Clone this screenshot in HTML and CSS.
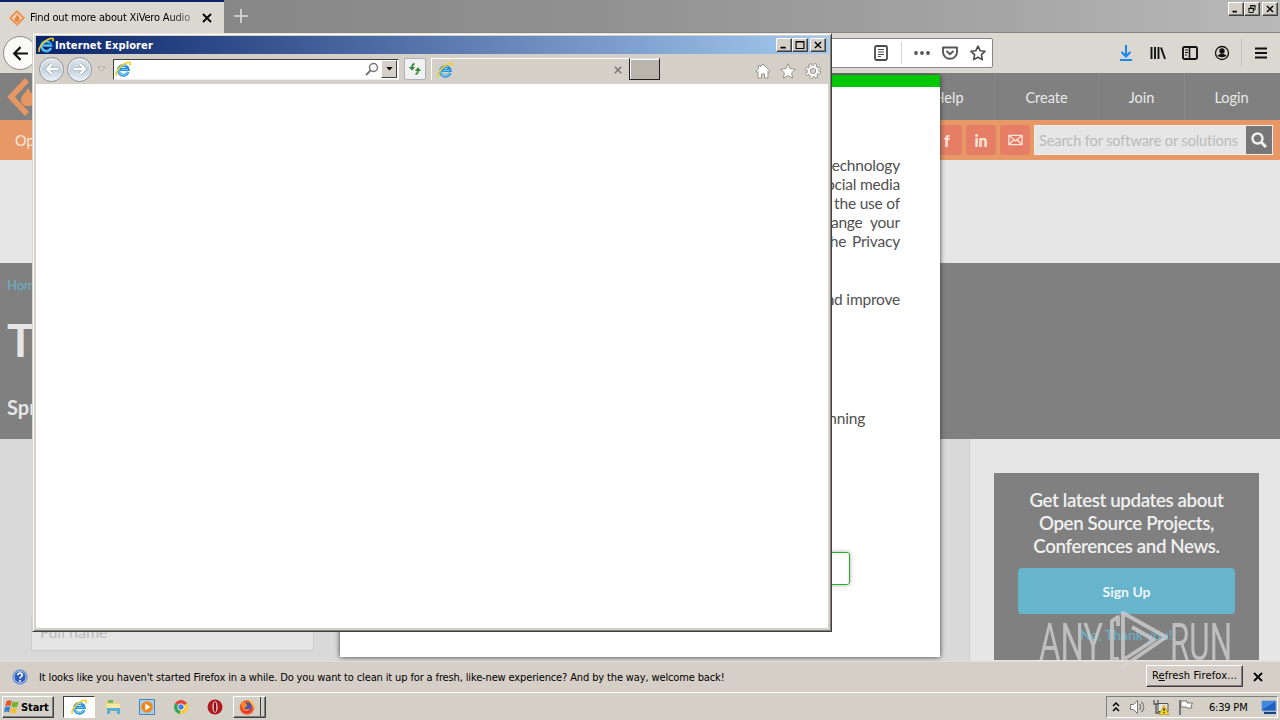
FILE: index.html
```
<!DOCTYPE html>
<html lang="en">
<head>
    <meta charset="UTF-8">
    <title>Find out more about XiVero Audio</title>
    <link rel="stylesheet" href="styles.css">
</head>
<body>
    <svg class="defs">
        <defs>
            <symbol id="ie" viewBox="0 0 16 16">
                <path d="M13 11A4.900 4.900 0 1 1 13.200 8.600H5" fill="none" stroke="#2b8fd3" stroke-width="3"/>
                <path d="M12.800 10.800A4.800 4.800 0 0 1 3.800 10.500C3.300 5.500 8 3.500 11 5M6 8.500h7" fill="none" stroke="#74c8f5" stroke-width="1.200"/>
                <path d="M1.500 14.800C-.8 11 7.500 1.600 14.200 1.300c1.600.2 1.100 2 .5 3" fill="none" stroke="#f2cf25" stroke-width="1.600"/>
            </symbol>
            <symbol id="diamond" viewBox="0 0 16 16">
                <path d="M8 0l8 8-8 8-8-8z" fill="#ee914f"/>
                <path d="M8 2.800L13.200 8 8 13.200 2.800 8z" fill="#f6ddc9"/>
                <path d="M8.300 3.800c.1 2 2.600 2.700 2.400 5C10.500 11 9.500 12 8 12s-2.700-1.300-2.500-3C5.700 7 8 6.300 8.300 3.800z" fill="#e98742"/>
            </symbol>
            <symbol id="cross" viewBox="0 0 10 10">
                <path d="M1 1l8 8M9 1L1 9" fill="none" stroke="currentColor" stroke-width="1.800"/>
            </symbol>
            <symbol id="glass" viewBox="0 0 16 16">
                <circle cx="6.500" cy="6.500" r="5" fill="none" stroke="currentColor" stroke-width="2.400"/>
                <path d="M10 10l5 5" stroke="currentColor" stroke-width="3"/>
            </symbol>
        </defs>
    </svg>

    <div class="desktop">
        <!-- Firefox window -->
        <div class="tabbar">
            <div class="tab">
                <svg class="tab-icon"><use href="#diamond"/></svg>
                <span class="tab-title">Find out more about XiVero Audio</span>
                <svg class="tab-close"><use href="#cross"/></svg>
            </div>
            <svg class="new-tab" viewBox="0 0 14 14"><path d="M7 0v14M0 7h14" stroke="#dedede" stroke-width="1.600"/></svg>
            <div class="win-buttons">
                <button><svg viewBox="0 0 16 13"><path d="M4 9.500h5" stroke="#000" stroke-width="2"/></svg></button>
                <button><svg viewBox="0 0 16 13"><path d="M6.500 5V2.500h5v5H9M4.500 5.500h5v5h-5zM6 3h6M4 6h6" fill="none" stroke="#000"/></svg></button>
                <button class="close"><svg viewBox="0 0 16 13"><path d="M4.500 3l7 7M11.500 3l-7 7" stroke="#000" stroke-width="1.600"/></svg></button>
            </div>
        </div>

        <div class="toolbar">
            <div class="back"><svg viewBox="0 0 16 16"><path d="M15 8H2M8 2L2 8l6 6" fill="none" stroke="#111" stroke-width="2"/></svg></div>
            <div class="urlbar">
                <svg class="reader" viewBox="0 0 16 16"><rect x="2" y="1" width="12" height="14" rx="1.500" fill="none" stroke="#4a4a4a" stroke-width="1.800"/><path d="M5 4.500h6M5 7h6M5 9.500h6M5 11.500h3" stroke="#4a4a4a"/></svg>
                <span class="sep"></span>
                <svg class="dots" viewBox="0 0 16 16"><g fill="#555"><circle cx="2" cy="8" r="1.900"/><circle cx="8" cy="8" r="1.900"/><circle cx="14" cy="8" r="1.900"/></g></svg>
                <svg class="pocket" viewBox="0 0 16 16"><path d="M1 2.500h14v4.500a7 6.800 0 0 1-14 0z" fill="none" stroke="#555" stroke-width="1.900" stroke-linejoin="round"/><path d="M4.500 6L8 9.300 11.500 6" fill="none" stroke="#555" stroke-width="1.900"/></svg>
                <svg class="star" viewBox="0 0 16 16"><path d="M8 1.200l2.100 4.500 4.900.6-3.600 3.400.9 4.900L8 12.200l-4.300 2.400.9-4.900L1 6.300l4.900-.6z" fill="none" stroke="#4c4c4c" stroke-width="1.600" stroke-linejoin="round"/></svg>
            </div>
            <div class="tools">
                <svg viewBox="0 0 16 16"><path d="M8 0v11M3.500 7L8 11.500 12.500 7M2 15h12" fill="none" stroke="#1687f0" stroke-width="2"/></svg>
                <svg viewBox="0 0 16 16"><path d="M1.500 2v12M5 2v12M8.500 2v12M11 2.500l4 11.500" fill="none" stroke="#111" stroke-width="1.900"/></svg>
                <svg viewBox="0 0 16 16"><rect x="1" y="2" width="14" height="12" rx="1.500" fill="none" stroke="#111" stroke-width="1.900"/><path d="M7.500 2v12" stroke="#111" stroke-width="1.600"/><path d="M3 5h3M3 7.500h3M3 10h2" stroke="#111"/></svg>
                <svg viewBox="0 0 16 16"><circle cx="8" cy="8" r="6.500" fill="none" stroke="#111" stroke-width="1.300"/><circle cx="8" cy="6" r="2.700" fill="#111"/><path d="M3.500 10.500c3-2.300 6-2.300 9 0C11 12.800 5 12.800 3.500 10.500z" fill="#111"/></svg>
                <span class="sep"></span>
                <svg viewBox="0 0 16 16"><path d="M2 3.500h12M2 8h12M2 12.500h12" stroke="#111" stroke-width="2"/></svg>
            </div>
        </div>

        <div class="page">
            <div class="site-header">
                <svg class="logo" viewBox="0 0 40 40"><path d="M20 3L4 20l16 17" fill="none" stroke="#e79763" stroke-width="5.500"/><path d="M21 10c0 5-7 7-7 13 0 4 3 6 7 6s7-2 7-6c0-5-6-8-7-13z" fill="#e79763"/></svg>
                <nav>
                    <a class="nav-help">Help</a>
                    <a class="nav-create">Create</a>
                    <a class="nav-join">Join</a>
                    <a class="nav-login">Login</a>
                </nav>
            </div>
            <div class="orange-bar">
                <a class="menu-link">Open Source</a>
                <div class="social">
                    <span>f</span>
                    <span>in</span>
                    <span><svg viewBox="0 0 16 12"><path d="M1 1h14v10H1zM1 1l7 6 7-6M1 11l5-5M15 11l-5-5" fill="none" stroke="#fbe6de" stroke-width="1.400"/></svg></span>
                </div>
                <div class="search">
                    <span class="search-text">Search for software or solutions</span>
                    <span class="search-btn"><svg><use href="#glass"/></svg></span>
                </div>
            </div>
            <div class="ad-space"></div>
            <div class="hero">
                <a class="crumb">Home</a>
                <h1>The</h1>
                <p>Spread</p>
            </div>
            <div class="content">
                <div class="main-col">
                    <div class="field">Full name</div>
                </div>
                <aside>
                    <div class="newsletter">
                        <h2>Get latest updates about<br>Open Source Projects,<br>Conferences and News.</h2>
                        <a class="signup">Sign Up</a>
                        <a class="no-thanks">No, Thank you!</a>
                    </div>
                </aside>
            </div>

            <!-- consent dialog -->
            <div class="consent">
                <p><span>technology</span><span>social media</span><span>the use of</span><span class="wide">change your</span><span class="mid">the Privacy</span></p>
                <p class="improve"><span>and improve</span></p>
                <p class="running"><span>running</span></p>
                <div class="accept"></div>
            </div>
        </div>

        <div class="notice">
            <svg class="help-icon" viewBox="0 0 16 16"><circle cx="8" cy="8" r="7.300" fill="#2c5bc0" stroke="#8eabd9"/><circle cx="8" cy="8" r="6" fill="none" stroke="#e8effc" stroke-width=".8"/><path d="M5.700 6.200c.2-3 4.800-2.700 4.600 0C10.200 7.700 8 7.600 8 9.500M8 11v1.800" fill="none" stroke="#fff" stroke-width="1.700"/></svg>
            <span class="notice-text">It looks like you haven't started Firefox in a while. Do you want to clean it up for a fresh, like-new experience? And by the way, welcome back!</span>
            <button class="refresh"><span>R<u>e</u>fresh Firefox...</span></button>
            <svg class="notice-close"><use href="#cross"/></svg>
        </div>

        <div class="taskbar">
            <button class="start">
                <svg viewBox="0 0 16 16"><path d="M2.500 2.500c2-1.600 3.500-1.400 5.300-.4L6.500 7.200c-1.700-1-3.400-1-5.300.2z" fill="#e5572a"/><path d="M8.700 2.500c2 1 3.700 1.100 6 0l-1.500 5.200c-2 1-3.800.8-5.800-.2z" fill="#72b62c"/><path d="M1 8.300c2-1.200 3.600-1 5.300-.1L5 13.300c-1.800-1-3.400-.9-5 .2z" fill="#367fd2"/><path d="M7.200 8.600c2 1 3.700 1 5.900.1l-1.400 5.100c-2.100 1-4 .7-5.900-.2z" fill="#f5bd2d"/></svg>
                <span>Start</span>
            </button>
            <div class="task active"><svg><use href="#ie"/></svg></div>
            <div class="task"><svg viewBox="0 0 16 16"><path d="M1 2h5l1 2h8v9H1z" fill="#eed479"/><path d="M3 1h5v3H3z" fill="#6fb864"/><path d="M2 5h13v5H2z" fill="#f9e9a5"/><path d="M2 9h13v6h-3v-3H5v3H2z" fill="#55aede"/></svg></div>
            <div class="task"><svg viewBox="0 0 16 16"><path d="M.5.5h15v15H.5z" fill="#a9ceec" stroke="#4386bf"/><circle cx="8" cy="8" r="5.800" fill="#f18518"/><path d="M6.300 4.500L11.500 8l-5.200 3.500z" fill="#fff"/></svg></div>
            <div class="task"><svg viewBox="0 0 16 16"><path d="M8 8L2 4.500A7 7 0 0 1 14 4.500z" fill="#df483b"/><path d="M8 8L2 4.500A7 7 0 0 0 7 15z" fill="#35a553"/><path d="M8 8l6.200-3.500A7 7 0 0 1 7 15z" fill="#f8cd3d"/><circle cx="8" cy="8" r="3.500" fill="#fff"/><circle cx="8" cy="8" r="2.700" fill="#477fe3"/></svg></div>
            <div class="task"><svg viewBox="0 0 16 16"><circle cx="8" cy="8" r="7.500" fill="#b41720"/><ellipse cx="8" cy="8" rx="2.600" ry="5.700" fill="#e9dddd"/><ellipse cx="8" cy="8" rx="1.300" ry="5" fill="#8a0f16"/></svg></div>
            <div class="task raised"><svg viewBox="0 0 16 16"><circle cx="8" cy="8.500" r="7.300" fill="#f05a22"/><path d="M9 0c5 2 7 6 5.800 10C14 6 12 5 9 0z" fill="#ffc72e"/><path d="M2 4c2 6 5 8 11 7-4 6-12 3-11-7z" fill="#e62d48"/><circle cx="8.500" cy="7.500" r="4" fill="#4453b8"/><path d="M2 3c3 0 6 1 6 4 0 1-2 1-3 2 2 2 5 1 6 0-1 5-9 5-9-6z" fill="#fb8c22"/></svg></div>
            <div class="tray">
                <svg class="chevrons" viewBox="0 0 8 12"><path d="M1 5l3-3 3 3M1 10l3-3 3 3" fill="none" stroke="#000" stroke-width="1.500"/></svg>
                <svg class="sound" viewBox="0 0 16 16"><path d="M1 5.500h3l4-4v13l-4-4H1z" fill="#fff" stroke="#777"/><path d="M10 5c1.500 2 1.500 4 0 6M12 3c3 3 3 7 0 10" fill="none" stroke="#777" stroke-width="1.200"/></svg>
                <svg class="network" viewBox="0 0 16 16"><path d="M5 4.500h10v8H5z" fill="#e6e6e6" stroke="#555"/><path d="M1 1v4h4V1M3 5v9h5" fill="none" stroke="#555" stroke-width="1.300"/><path d="M11 6l4.800 9.500H6.200z" fill="#f6d51f" stroke="#b59106" stroke-width=".6"/><path d="M11 9v3M11 13v1.300" stroke="#222" stroke-width="1.200"/></svg>
                <svg class="flag" viewBox="0 0 16 16"><path d="M2.500 1v15" stroke="#777" stroke-width="2"/><path d="M3.500 2h6v2H15l-1.500 3 1 2H9V8H3.500z" fill="#fff" stroke="#777"/></svg>
                <span class="clock">6:39 PM</span>
                <svg class="show-desktop" viewBox="0 0 16 14"><path d="M1 1h14v10H1z" fill="#2161bd" stroke="#78a4da"/><path d="M2 2h12L2 9z" fill="#3e8ae0"/><path d="M3 13h12" stroke="#174382" stroke-width="2"/></svg>
            </div>
        </div>

        <!-- Internet Explorer window -->
        <div class="ie-window">
            <div class="ie-title">
                <svg><use href="#ie"/></svg>
                <span>Internet Explorer</span>
                <div class="win-buttons">
                    <button><svg viewBox="0 0 16 13"><path d="M4 9.500h6" stroke="#000" stroke-width="2"/></svg></button>
                    <button><svg viewBox="0 0 16 13"><path d="M3.500 2.500h9v8h-9zM3 3h10" fill="none" stroke="#000" stroke-width="1.300"/></svg></button>
                    <button class="close"><svg viewBox="0 0 16 13"><path d="M4.500 3l7 7M11.500 3l-7 7" stroke="#000" stroke-width="1.600"/></svg></button>
                </div>
            </div>
            <div class="ie-bar">
                <div class="round"><svg viewBox="0 0 16 16"><path d="M14 8H4M8 3L3 8l5 5" fill="none" stroke="#9fb0bf" stroke-width="4"/><path d="M14 8H4M8 3L3 8l5 5" fill="none" stroke="#fff" stroke-width="2.400"/></svg></div>
                <div class="round"><svg viewBox="0 0 16 16"><path d="M2 8h10M8 3l5 5-5 5" fill="none" stroke="#9fb0bf" stroke-width="4"/><path d="M2 8h10M8 3l5 5-5 5" fill="none" stroke="#fff" stroke-width="2.400"/></svg></div>
                <svg class="history" viewBox="0 0 9 6"><path d="M1 1h7L4.500 5z" fill="#e9e6e0" stroke="#aaa59c"/></svg>
                <div class="address">
                    <svg class="e"><use href="#ie"/></svg>
                    <svg class="find" viewBox="0 0 14 14"><circle cx="8.500" cy="5.500" r="4" fill="none" stroke="#777" stroke-width="1.500"/><path d="M5.500 8.500L1 13" stroke="#777" stroke-width="2"/></svg>
                    <div class="drop"><svg viewBox="0 0 8 5"><path d="M0 0h8L4 4.500z"/></svg></div>
                </div>
                <div class="reload"><svg viewBox="0 0 16 16"><path d="M7.500 3C5.500 3 5 4.500 5 7M8.500 13c2 0 2.500-1.500 2.500-4" fill="none" stroke="#36893b" stroke-width="1.800"/><path d="M1.800 6h6.400L5 9.800zM7.800 10h6.400L11 6.200z" fill="#36893b"/></svg></div>
                <div class="ie-tab"><svg class="e"><use href="#ie"/></svg><svg class="x"><use href="#cross"/></svg></div>
                <div class="ie-newtab"></div>
                <div class="ie-tools">
                    <svg viewBox="0 0 16 16"><path d="M8 1l7 7-1 1.500-1-1V15H9.500v-4h-3v4H3V8.500l-1 1L1 8l2.500-2.500V2.500h2v1z" fill="#fff" stroke="#97938c"/></svg>
                    <svg viewBox="0 0 16 16"><path d="M8 .8l2.200 4.900 5.300.6-3.900 3.600 1 5.300L8 12.600l-4.600 2.600 1-5.300L.5 6.300l5.300-.6z" fill="#fff" stroke="#97938c"/></svg>
                    <svg viewBox="0 0 16 16"><circle cx="8" cy="8" r="6.400" fill="none" stroke="#8e8a84" stroke-width="3.200" stroke-dasharray="3 2.020"/><circle cx="8" cy="8" r="4.200" fill="none" stroke="#8e8a84" stroke-width="4"/><circle cx="8" cy="8" r="6.300" fill="none" stroke="#fff" stroke-width="1.800" stroke-dasharray="2 2.948" stroke-dashoffset="-.5"/><circle cx="8" cy="8" r="4.200" fill="none" stroke="#fff" stroke-width="2.400"/></svg>
                </div>
            </div>
            <div class="ie-page"></div>
        </div>

        <!-- watermark -->
        <svg class="watermark" viewBox="0 0 196 66">
            <text x="1" y="51" textLength="64" lengthAdjust="spacingAndGlyphs">ANY</text>
            <path d="M80 17V8l-6 4v38h7"/>
            <path d="M85 51V4l43 24-45 31M94 18l22 13-31 20"/>
            <text x="132" y="51" textLength="62" lengthAdjust="spacingAndGlyphs">RUN</text>
        </svg>
    </div>
</body>
</html>
```

FILE: styles.css
```
* {
    box-sizing: border-box;
}
body {
    margin: 0;
    overflow: hidden;
    font-family: "DejaVu Sans Condensed", "DejaVu Sans", sans-serif;
    font-size: 11px;
    color: #000;
}
svg {
    display: block;
    flex: none;
}
button {
    font: inherit;
    padding: 0;
}
.defs {
    position: absolute;
    width: 0;
    height: 0;
}
.desktop {
    position: relative;
    display: flex;
    flex-direction: column;
    width: 1280px;
    height: 720px;
    overflow: hidden;
    background: #d4d0c8;
}

/* Firefox chrome */
.tabbar {
    display: flex;
    height: 33px;
    background: linear-gradient(90deg, #878787 18%, #909090 45%, #a3a3a3 75%, #b9b9b9);
    border-bottom: 1px solid #858585;
}
.tab {
    display: flex;
    align-items: center;
    width: 224px;
    height: 33px;
    padding: 0 11px 0 9px;
    background: #dbd7d1;
    border-top: 2px solid #0b246a;
}
.tab-icon {
    width: 16px;
    height: 16px;
}
.tab-title {
    width: 162px;
    margin-left: 5px;
    overflow: hidden;
    white-space: nowrap;
    letter-spacing: -0.18px;
    -webkit-mask-image: linear-gradient(90deg, #000 85%, rgba(0, 0, 0, 0.4));
    mask-image: linear-gradient(90deg, #000 85%, rgba(0, 0, 0, 0.4));
}
.tab-close {
    width: 10px;
    height: 10px;
    margin-left: 10px;
}
.new-tab {
    width: 14px;
    height: 14px;
    margin: 9px 0 0 10px;
}
.win-buttons {
    display: flex;
    margin-left: auto;
}
.win-buttons button {
    width: 16px;
    height: 14px;
    background: #d4d0c8;
    border: 1px solid;
    border-color: #fff #404040 #404040 #fff;
    box-shadow: inset -1px -1px #808080;
}
.win-buttons svg {
    width: 14px;
    height: 12px;
}
.win-buttons .close {
    margin-left: 2px;
}
.tabbar .win-buttons {
    margin-top: 2px;
    margin-right: 2px;
}
.toolbar {
    display: flex;
    align-items: center;
    height: 40px;
    background: #dbd7d1;
}
.back {
    display: flex;
    align-items: center;
    justify-content: center;
    width: 34px;
    height: 34px;
    margin-left: 3px;
    background: #fbfbfa;
    border: 1px solid #8e8b86;
    border-radius: 50%;
}
.back svg {
    width: 17px;
    height: 17px;
}
.urlbar {
    display: flex;
    align-items: center;
    justify-content: flex-end;
    width: 860px;
    height: 30px;
    margin-left: 96px;
    padding-right: 6px;
    background: #fff;
    border: 1px solid #858585;
    border-radius: 2px;
}
.urlbar svg {
    width: 16px;
    height: 16px;
}
.urlbar .sep {
    width: 1px;
    height: 22px;
    margin: 0 12px;
    background: #d5d5d5;
}
.pocket,
.star {
    margin-left: 12px;
}
.tools {
    display: flex;
    align-items: center;
    gap: 16px;
    margin-left: auto;
    padding-right: 11px;
}
.tools svg {
    width: 16px;
    height: 16px;
}
.tools .sep {
    width: 1px;
    height: 28px;
    margin: 0 -5px;
    background: #c6c2bb;
}

/* site */
.page {
    position: relative;
    height: 588px;
    overflow: hidden;
    font-family: Lato, sans-serif;
    background: #e6e6e6;
}
.site-header {
    display: flex;
    justify-content: space-between;
    height: 47px;
    background: #808080;
}
.logo {
    width: 40px;
    height: 40px;
    margin: 4px 0 0 7px;
}
nav {
    display: flex;
    font-size: 14.5px;
    line-height: 50px;
    color: #e9e9e9;
    text-align: center;
}
nav a {
    border-right: 1px solid #888;
}
.nav-help {
    width: 89px;
    padding-right: 3px;
}
.nav-create {
    width: 104px;
}
.nav-join {
    width: 86px;
}
.nav-login {
    width: 95px;
    padding-right: 2px;
    border: none;
}
.orange-bar {
    display: flex;
    align-items: center;
    height: 40px;
    padding-right: 7px;
    background: #e89866;
}
.menu-link {
    padding-left: 15px;
    font-size: 14.5px;
    color: #f5eade;
}
.social {
    display: flex;
    gap: 4px;
    margin-left: auto;
}
.social span {
    display: flex;
    align-items: center;
    justify-content: center;
    width: 30px;
    height: 30px;
    font-size: 16px;
    font-weight: 900;
    color: #fbe6de;
    background: #e67e66;
    border-radius: 3px;
}
.social svg {
    width: 15px;
    height: 12px;
}
.search {
    display: flex;
    width: 239px;
    height: 30px;
    margin-left: 4px;
    background: #e6e6e6;
    border: 1px solid #eee;
}
.search-text {
    width: 211px;
    padding-left: 4px;
    font-size: 14.5px;
    line-height: 29px;
    letter-spacing: -0.09px;
    white-space: nowrap;
    color: #bababa;
}
.search-btn {
    display: flex;
    align-items: center;
    justify-content: center;
    width: 26px;
    color: #f0f0f0;
    background: #777;
}
.search-btn svg {
    width: 16px;
    height: 16px;
}
.ad-space {
    height: 103px;
}
.hero {
    height: 176px;
    padding-left: 7px;
    color: #e6e6e6;
    background: #808080;
}
.crumb {
    display: block;
    padding-top: 14px;
    font-size: 13px;
    line-height: 16px;
    color: #68b2cb;
}
.hero h1 {
    margin: 17px 0 0;
    font-size: 45px;
    font-weight: 700;
    line-height: 60px;
}
.hero p {
    margin: 25px 0 0;
    font-size: 20px;
    font-weight: 700;
    line-height: 24px;
}
.content {
    display: flex;
    height: 222px;
}
.main-col {
    width: 970px;
    padding: 176px 0 0 31px;
    background: #d9d9d9;
    border-right: 1px solid #cecece;
}
.field {
    width: 283px;
    height: 36px;
    padding-left: 8px;
    font-size: 16px;
    line-height: 32px;
    color: #bcbcbc;
    background: #e4e4e4;
    border: 1px solid #cacaca;
    border-radius: 2px;
}
aside {
    padding: 34px 0 0 24px;
}
.newsletter {
    display: flex;
    flex-direction: column;
    align-items: center;
    width: 265px;
    height: 187px;
    padding-top: 16px;
    text-align: center;
    background: #808080;
}
.newsletter h2 {
    margin: 0;
    font-size: 18.7px;
    font-weight: 600;
    line-height: 23px;
    letter-spacing: -0.38px;
    color: #f0f0f0;
}
.signup {
    width: 217px;
    height: 46px;
    margin-top: 10px;
    font-size: 14px;
    font-weight: 700;
    line-height: 48px;
    color: #eef6f8;
    background: #67b4cd;
    border-radius: 4px;
}
.no-thanks {
    margin-top: 12px;
    font-size: 14px;
    line-height: 18px;
    color: #67b4cd;
}
.consent {
    position: absolute;
    left: 340px;
    top: 2px;
    width: 600px;
    height: 582px;
    padding: 69px 40px 0;
    font-size: 15.5px;
    line-height: 19px;
    letter-spacing: -0.2px;
    text-align: right;
    color: #505050;
    background: #fff;
    border-top: 12px solid #00c800;
    box-shadow: 0 0 5px #333;
}
.consent p {
    margin: 0;
}
.consent span {
    display: block;
}
.consent .wide {
    word-spacing: 4px;
}
.consent .mid {
    word-spacing: 2px;
}
.consent .improve {
    margin-top: 39px;
}
.consent .running {
    margin: 100px 35px 0 0;
}
.accept {
    width: 120px;
    height: 33px;
    margin: 124px 50px 0 auto;
    border: 1px solid #20b520;
    border-radius: 3px;
    box-shadow: 0 0 4px #aaa;
}

/* Firefox notification */
.notice {
    display: flex;
    align-items: center;
    height: 31px;
    padding-left: 12px;
    background: #d6cfc7;
    border-top: 1px solid #dfdcd6;
}
.help-icon {
    width: 16px;
    height: 16px;
}
.notice-text {
    width: 700px;
    margin-left: 11px;
    white-space: nowrap;
    letter-spacing: -0.135px;
}
.refresh {
    width: 97px;
    height: 22px;
    margin: -3px 0 0 auto;
    background: #d6cfc7;
    border: 1px solid;
    border-color: #fff #404040 #404040 #fff;
    box-shadow: inset -1px -1px #808080;
    letter-spacing: 0.14px;
}
.notice-close {
    width: 10px;
    height: 10px;
    margin: 0 17px 0 10px;
}

/* taskbar */
.taskbar {
    display: flex;
    align-items: center;
    height: 28px;
    padding: 1px 2px 0;
    background: #d4d0c8;
    border-top: 1px solid #fff;
}
.start {
    display: flex;
    align-items: center;
    gap: 1px;
    width: 52px;
    height: 22px;
    margin-right: 9px;
    padding-left: 1px;
    font-size: 11px;
    font-weight: 700;
    letter-spacing: -0.1px;
    background: #d4d0c8;
    border: 1px solid;
    border-color: #fff #404040 #404040 #fff;
    box-shadow: inset -1px -1px #808080;
}
.start svg {
    width: 16px;
    height: 16px;
}
.task {
    display: flex;
    align-items: center;
    justify-content: center;
    width: 32px;
    height: 22px;
    margin-right: 2px;
}
.task svg {
    width: 16px;
    height: 16px;
}
.task.active {
    background: #fff;
    border: 1px solid;
    border-color: #404040 #fff #fff #404040;
}
.task.raised {
    width: 33px;
    padding-right: 6px;
    border: 1px solid;
    border-color: #fff #404040 #404040 #fff;
    background: linear-gradient(#404040, #404040) 26px 0 / 1px 100% no-repeat, #d4d0c8;
    box-shadow: inset -1px -1px #808080;
}
.tray {
    display: flex;
    align-items: center;
    width: 172px;
    height: 22px;
    margin-left: auto;
    padding-left: 5px;
    border: 1px solid;
    border-color: #808080 #fff #fff #808080;
}
.chevrons {
    width: 8px;
    height: 12px;
}
.sound {
    width: 17px;
    height: 16px;
    margin-left: 9px;
}
.network {
    width: 16px;
    height: 16px;
    margin-left: 7px;
}
.flag {
    width: 17px;
    height: 16px;
    margin-left: 8px;
}
.clock {
    margin-left: 15px;
    letter-spacing: -0.2px;
    white-space: nowrap;
}
.show-desktop {
    width: 16px;
    height: 14px;
    margin-left: auto;
}

/* Internet Explorer */
.ie-window {
    position: absolute;
    left: 32px;
    top: 33px;
    display: flex;
    flex-direction: column;
    width: 800px;
    height: 599px;
    padding: 2px;
    background: #d4d0c8;
    border: 1px solid;
    border-color: #e8e5df #404040 #404040 #d4d0c8;
    box-shadow: inset 1px 1px #fff, inset -1px -1px #808080;
}
.ie-title {
    display: flex;
    align-items: center;
    height: 18px;
    margin: 0 0 0 1px;
    padding: 0 3px 0 2px;
    color: #fff;
    font-weight: 700;
    background: linear-gradient(90deg, #0a246a, #a6caf0);
}
.ie-title svg {
    width: 16px;
    height: 16px;
}
.ie-title span {
    margin-left: 1px;
    letter-spacing: 0.12px;
}
.ie-title .win-buttons svg {
    width: 14px;
    height: 12px;
}
.ie-bar {
    display: flex;
    align-items: center;
    height: 30px;
    padding-left: 4px;
}
.round {
    display: flex;
    align-items: center;
    justify-content: center;
    width: 25px;
    height: 25px;
    margin-right: 3px;
    background: linear-gradient(#e3e8ec, #c5d0d9 50%, #e5f3fc);
    border: 1px solid #8b949b;
    border-radius: 50%;
    box-shadow: inset 0 0 0 1px #eef2f5;
}
.round svg {
    width: 16px;
    height: 16px;
}
.history {
    width: 9px;
    height: 6px;
    margin-left: 2px;
}
.address {
    display: flex;
    align-items: center;
    width: 286px;
    height: 21px;
    margin-left: 7px;
    padding-left: 1px;
    background: #fff;
    border: 1px solid;
    border-color: #404040 #fff #eee #404040;
}
.e {
    width: 16px;
    height: 16px;
}
.find {
    width: 14px;
    height: 14px;
    margin-left: auto;
}
.drop {
    display: flex;
    align-items: center;
    justify-content: center;
    width: 16px;
    height: 18px;
    margin: 0 1px 0 2px;
    background: #d4d0c8;
    border: 1px solid;
    border-color: #fff #404040 #404040 #fff;
}
.drop svg {
    width: 7px;
    height: 4px;
}
.reload {
    display: flex;
    align-items: center;
    justify-content: center;
    width: 22px;
    height: 22px;
    margin-left: 5px;
    background: #f1f1f2;
    border: 1px solid #aeb1bc;
    border-radius: 2px;
}
.reload svg {
    width: 16px;
    height: 16px;
}
.ie-tab {
    display: flex;
    align-items: center;
    justify-content: space-between;
    width: 198px;
    height: 22px;
    margin-left: 5px;
    padding: 0 7px 0 5px;
    border-top: 1px solid #fff;
    border-left: 1px solid #fff;
}
.ie-tab .x {
    width: 8px;
    height: 8px;
    color: #77736d;
}
.ie-newtab {
    width: 31px;
    height: 22px;
    background: #b9b4ac;
    border: 1px solid #222;
    border-top-color: #ddd;
    box-shadow: inset 1px 1px #fff;
}
.ie-tools {
    display: flex;
    gap: 9px;
    margin: 3px 8px 0 auto;
}
.ie-tools svg {
    width: 16px;
    height: 16px;
}
.ie-page {
    flex: 1;
    margin: 0 1px 1px;
    background: #fff;
}

.watermark {
    position: absolute;
    left: 1038px;
    top: 609px;
    width: 196px;
    height: 66px;
    overflow: visible;
    font-family: Roboto, sans-serif;
    font-size: 52px;
    font-weight: 400;
    fill: #d5d5d5;
    opacity: 0.75;
}
.watermark path {
    fill: none;
    stroke: #d5d5d5;
    stroke-width: 3.8;
    stroke-linejoin: round;
}
```
